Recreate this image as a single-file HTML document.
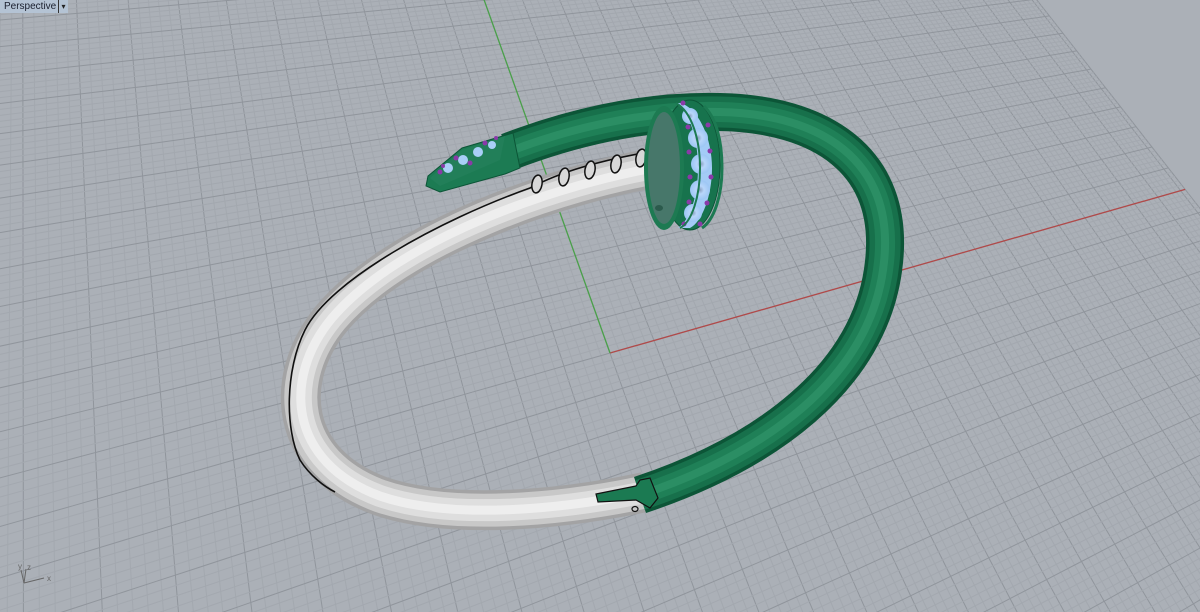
<!DOCTYPE html>
<html><head><meta charset="utf-8"><style>
html,body{margin:0;padding:0;width:1200px;height:612px;overflow:hidden;background:#abb0b7}
#lbl{position:absolute;left:0;top:0;height:13px;width:58px;background:#b4c3d4;font:10px "Liberation Sans",sans-serif;color:#1a1f2e;padding:0 0 0 4px;line-height:13px;box-sizing:border-box;white-space:nowrap;overflow:hidden}
#arr{position:absolute;left:58px;top:0;height:13px;width:9px;background:#b4c3d4;border-left:1px solid #333;font:8px "Liberation Sans",sans-serif;line-height:13px;text-align:center;color:#222}
</style></head><body>
<svg id="s" width="1200" height="612" style="position:absolute;left:0;top:0;overflow:hidden">
<defs>
<radialGradient id="gem" cx="50%" cy="50%" r="50%"><stop offset="0" stop-color="#8aa0c0"/><stop offset="0.4" stop-color="#b8d6fb"/><stop offset="1" stop-color="#9cc6f4"/></radialGradient>
</defs>
<g id="grid"></g>
<g id="axes"></g>
<g fill="none" stroke-linecap="butt">
<path d="M665,166 C560,183 400,238 332,318 C282,378 288,462 380,496 C450,520 560,510 645,492" stroke="#a3a3a4" stroke-width="40"/>
<path d="M665,166 C560,183 400,238 332,318 C282,378 288,462 380,496 C450,520 560,510 645,492" stroke="#c8c8c8" stroke-width="33"/>
<path d="M665,166 C560,183 400,238 332,318 C282,378 288,462 380,496 C450,520 560,510 645,492" stroke="#dedede" stroke-width="22"/>
<path d="M665,166 C560,183 400,238 332,318 C282,378 288,462 380,496 C450,520 560,510 645,492" stroke="#eeeeee" stroke-width="9"/>
<path d="M660,150 C600,160 560,172 530,188 C440,220 330,280 305,330 C285,370 285,430 300,460 C310,476 325,487 335,492" stroke="#111" stroke-width="1.6"/>
</g>
<g fill="#d8d8d8" stroke="#111" stroke-width="1.5">
<ellipse cx="537" cy="184" rx="5" ry="9" transform="rotate(10 537 184)"/>
<ellipse cx="564" cy="177" rx="5" ry="9" transform="rotate(10 564 177)"/>
<ellipse cx="590" cy="170" rx="5" ry="9" transform="rotate(10 590 170)"/>
<ellipse cx="616" cy="164" rx="5" ry="9" transform="rotate(10 616 164)"/>
<ellipse cx="641" cy="158" rx="5" ry="9" transform="rotate(10 641 158)"/>
</g>
<g fill="none">
<path d="M640,495 C760,455 872,380 884,262 C895,160 820,114 720,112 C640,110 565,130 508,152" stroke="#0c5537" stroke-width="38"/>
<path d="M640,495 C760,455 872,380 884,262 C895,160 820,114 720,112 C640,110 565,130 508,152" stroke="#17704b" stroke-width="31"/>
<path d="M640,495 C760,455 872,380 884,262 C895,160 820,114 720,112 C640,110 565,130 508,152" stroke="#1f8057" stroke-width="20"/>
<path d="M640,495 C760,455 872,380 884,262 C895,160 820,114 720,112 C640,110 565,130 508,152" stroke="#2b8e64" stroke-width="8"/>
</g>
<path d="M596,494 L636,486 L640,480 L650,478 L658,498 L650,508 L636,500 L598,502 Z" fill="#1b7a52" stroke="#111" stroke-width="1.2"/>
<ellipse cx="635" cy="509" rx="3" ry="2.5" fill="none" stroke="#111" stroke-width="1.2"/>
<path d="M513,133 L520,168 L505,174 L440,192 L426,186 L428,176 L462,148 Z" fill="#1c7b53" stroke="#0c5537" stroke-width="1"/>
<path d="M430,178 L462,150 L505,136 L500,160 L440,186 Z" fill="#227f59"/>
<g fill="#a9cff7"><circle cx="448" cy="168" r="5"/><circle cx="463" cy="160" r="5"/><circle cx="478" cy="152" r="5"/><circle cx="492" cy="145" r="4"/></g>
<g fill="#8a3aa8"><circle cx="440" cy="172" r="2.5"/><circle cx="456" cy="158" r="2.5"/><circle cx="470" cy="163" r="2.5"/><circle cx="485" cy="143" r="2.5"/><circle cx="496" cy="138" r="2"/><circle cx="443" cy="166" r="2"/></g>
<ellipse cx="690" cy="165" rx="30" ry="65" fill="#17734d" stroke="#0c5537"/>
<ellipse cx="664" cy="168" rx="20" ry="62" fill="#1d7a52"/>
<ellipse cx="664" cy="168" rx="16" ry="56" fill="#47776a"/>
<ellipse cx="659" cy="208" rx="4" ry="3" fill="#2b5a4c"/>
<path d="M681,103 C700,110 712,140 712,168 C712,196 702,222 690,228 L678,228 C690,220 698,196 698,168 C698,140 690,112 676,103 Z" fill="#a3cbf6"/>
<g fill="url(#gem)"><circle cx="690" cy="116" r="8"/><circle cx="698" cy="138" r="10"/><circle cx="701" cy="164" r="10"/><circle cx="700" cy="190" r="10"/><circle cx="693" cy="213" r="9"/></g>
<g fill="#8a3aa8"><circle cx="683" cy="103" r="2.5"/><circle cx="688" cy="127" r="2.5"/><circle cx="708" cy="125" r="2.5"/><circle cx="689" cy="152" r="2.5"/><circle cx="710" cy="151" r="2.5"/><circle cx="690" cy="177" r="2.5"/><circle cx="711" cy="177" r="2.5"/><circle cx="689" cy="202" r="2.5"/><circle cx="707" cy="203" r="2.5"/><circle cx="684" cy="224" r="2.5"/><circle cx="700" cy="224" r="2.5"/></g>
<path d="M676,103 C692,112 700,140 700,168 C700,196 692,222 680,228" fill="none" stroke="#1c7a52" stroke-width="2"/>
<path d="M704,106 C716,118 722,140 722,168 C722,196 714,220 702,228" fill="none" stroke="#1c7a52" stroke-width="3"/>
<g stroke="#666" stroke-width="1" fill="none"><path d="M24,583 L44,578 M24,583 L21,570 M24,583 L26,569"/></g>
<g font-family="Liberation Sans,sans-serif" font-size="8" fill="#666"><text x="18" y="569">y</text><text x="27" y="570">z</text><text x="47" y="581">x</text></g>
</svg>
<div id="lbl">Perspective</div><div id="arr">▾</div>
<script>
(function(){
var O=[610,353],A=[45,-12.8],B=[-12.3,-34.5],c=0.0209,d=0.0233;
function P(X,Y){var w=1+d*X+c*Y;return [O[0]+(A[0]*X+B[0]*Y)/w,O[1]+(A[1]*X+B[1]*Y)/w,w];}
var g=document.getElementById('grid'),h='';
function seg(a,b,col){h+='<line x1="'+a[0].toFixed(1)+'" y1="'+a[1].toFixed(1)+'" x2="'+b[0].toFixed(1)+'" y2="'+b[1].toFixed(1)+'" stroke="'+col+'" stroke-width="1"/>';}
var X0=-25,X1=18.2,Y0=-12,Y1=60;
function line(fx,fy,t0,t1,col){var n=80,prev=null;for(var i=0;i<=n;i++){var t=t0+(t1-t0)*i/n;var p=P(fx(t),fy(t));if(p[2]<0.25){prev=null;continue;}if(prev)seg(prev,p,col);prev=p;}}
var minC='#a3a8af',majC='#90959c';
for(var k=Math.ceil(X0*5);k<=Math.floor(X1*5);k++){(function(x,maj){line(function(){return x},function(t){return t},Y0,Y1,maj?majC:minC);})(k/5,k%5==0);}
line(function(){return X1},function(t){return t},Y0,Y1,majC);
for(var k=Y0*5;k<=Y1*5;k++){(function(y,maj){line(function(t){return t},function(){return y},X0,X1,maj?majC:minC);})(k/5,k%5==0);}
g.innerHTML=h;
var a=document.getElementById('axes');
var o=P(0,0),xe=P(X1,0),ye=P(0,40);
a.innerHTML='<line x1="'+o[0]+'" y1="'+o[1]+'" x2="'+xe[0]+'" y2="'+xe[1]+'" stroke="#b04a4a" stroke-width="1.3"/><line x1="'+o[0]+'" y1="'+o[1]+'" x2="'+ye[0]+'" y2="'+ye[1]+'" stroke="#4aa04a" stroke-width="1.3"/>';
})();
</script>
</body></html>
